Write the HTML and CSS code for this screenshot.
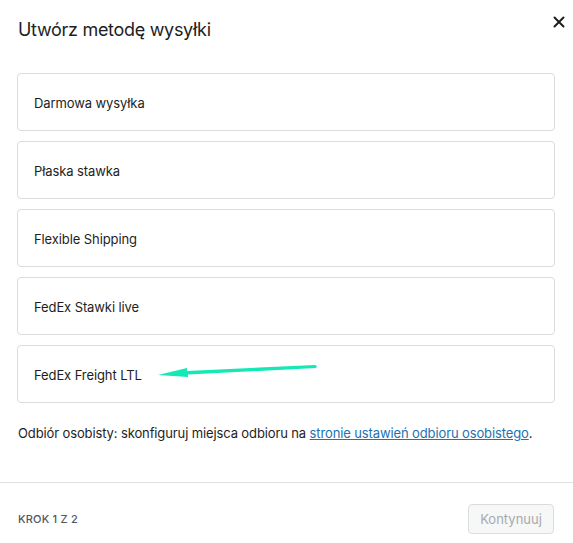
FILE: index.html
```html
<!DOCTYPE html>
<html lang="pl">
<head>
<meta charset="utf-8">
<link rel="stylesheet" href="styles.css">
</head>
<body>
<div class="modal">
  <div class="header">
    <h1 class="title">Utwórz metodę wysyłki</h1>
    <button class="close" aria-label="Zamknij">
      <svg width="12" height="12" viewBox="0 0 12 12"><path d="M1.5 1.5 L10.5 10.5 M10.5 1.5 L1.5 10.5" stroke="#1e1e1e" stroke-width="2" stroke-linecap="round"/></svg>
    </button>
  </div>
  <div class="body">
    <div class="options">
      <div class="option">Darmowa wysyłka</div>
      <div class="option">Płaska stawka</div>
      <div class="option">Flexible Shipping</div>
      <div class="option">FedEx Stawki live</div>
      <div class="option">FedEx Freight LTL</div>
    </div>
    <p class="note">Odbiór osobisty: skonfiguruj miejsca odbioru na <a href="#">stronie ustawień odbioru osobistego</a>.</p>
    <svg class="arrow" width="160" height="16" viewBox="0 0 160 16">
      <path d="M159 1 L158 3 L30 9.5 L30 12 L0 10 L29 3 L29 6 L157 0 Z" fill="#14e8b4"/>
    </svg>
  </div>
  <div class="footer">
    <span class="step">KROK 1 Z 2</span>
    <button class="continue" disabled>Kontynuuj</button>
  </div>
</div>
</body>
</html>
```
FILE: styles.css
```css
* { box-sizing: border-box; }
html, body { margin: 0; padding: 0; background: #fff; }
body {
  font-family: Inter, "Noto Sans", "Liberation Sans", sans-serif;
  color: #1e1e1e;
  width: 573px;
  height: 543px;
  overflow: hidden;
}
.modal {
  display: flex;
  flex-direction: column;
  height: 543px;
}
.header {
  display: flex;
  justify-content: space-between;
  align-items: flex-start;
  padding: 18px 8px 0 18px;
  height: 73px;
}
.title {
  margin: 0;
  font-size: 18px;
  font-weight: 400;
  line-height: 24px;
  letter-spacing: -0.3px;
}
.close {
  border: 0;
  background: none;
  padding: 0;
  width: 12px;
  height: 12px;
  margin-top: -2px;
  cursor: pointer;
  display: flex;
}
.body {
  position: relative;
  padding: 0 18px 0 17px;
  flex: 1;
}
.options {
  display: flex;
  flex-direction: column;
  gap: 10px;
}
.option {
  height: 58px;
  border: 1px solid #dcdcde;
  border-radius: 4px;
  display: flex;
  align-items: center;
  padding-left: 16px;
  font-size: 13px;
  letter-spacing: -0.1px;
  padding-top: 1px;
}
.note {
  margin: 20px 0 0 1px;
  font-size: 13px;
  line-height: 20px;
  letter-spacing: -0.12px;
}
.note a {
  color: #2271b1;
  text-decoration: underline;
}
.arrow {
  position: absolute;
  left: 158px;
  top: 292px;
}
.footer {
  height: 61px;
  border-top: 1px solid #e0e0e0;
  display: flex;
  justify-content: space-between;
  align-items: center;
  padding: 0 19px 0 18px;
}
.step {
  font-size: 11px;
  font-weight: 500;
  color: #50575e;
  letter-spacing: 0.2px;
  margin-top: 12px;
}
.continue {
  font-family: inherit;
  width: 86px;
  height: 30px;
  border: 1px solid #dcdcde;
  border-radius: 4px;
  background: #f6f7f7;
  color: #a7aaad;
  font-size: 13px;
  margin-top: 12px;
}
```
